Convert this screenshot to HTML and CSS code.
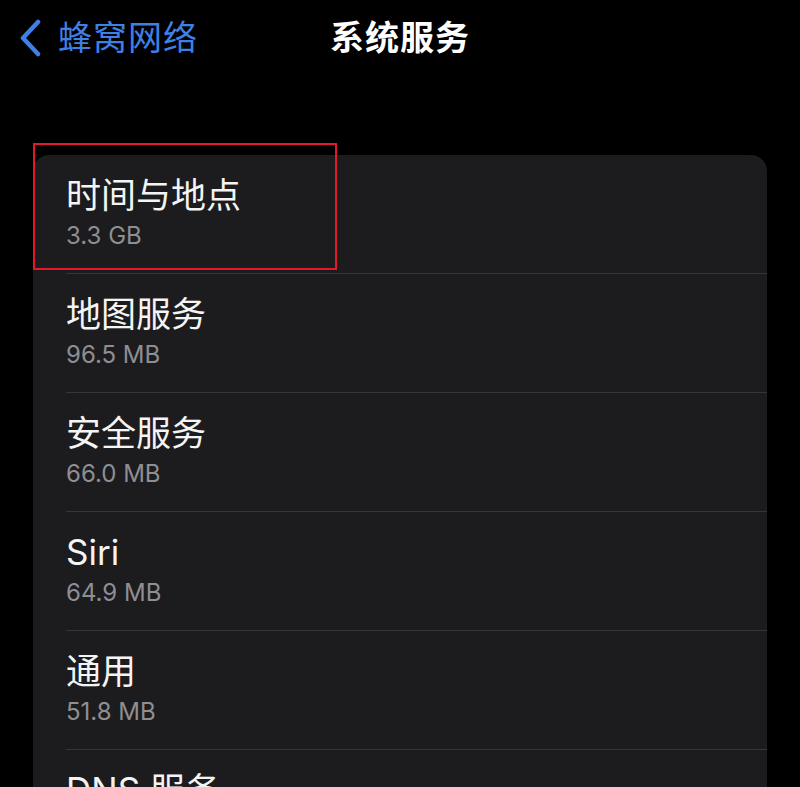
FILE: index.html
```html
<!DOCTYPE html>
<html lang="zh-CN">
<head>
<meta charset="utf-8">
<title>系统服务</title>
<link rel="stylesheet" href="styles.css">
</head>
<body>
<div class="screen">
  <header class="nav">
    <a class="back">
      <svg class="chev" width="24" height="38" viewBox="0 0 24 38"><path d="M20 3 L5 19 L20 35" fill="none" stroke="currentColor" stroke-width="4.5" stroke-linecap="round" stroke-linejoin="round"/></svg>
      <span class="back-label">蜂窝网络</span>
    </a>
    <h1 class="title">系统服务</h1>
  </header>
  <section class="card">
    <div class="row"><div class="row-title">时间与地点</div><div class="row-sub">3.3 GB</div></div>
    <div class="row"><div class="row-title">地图服务</div><div class="row-sub">96.5 MB</div></div>
    <div class="row"><div class="row-title">安全服务</div><div class="row-sub">66.0 MB</div></div>
    <div class="row"><div class="row-title">Siri</div><div class="row-sub">64.9 MB</div></div>
    <div class="row"><div class="row-title">通用</div><div class="row-sub">51.8 MB</div></div>
    <div class="row"><div class="row-title">DNS 服务</div><div class="row-sub">40.2 MB</div></div>
  </section>
  <div class="highlight"></div>
</div>
</body>
</html>
```
FILE: styles.css
```css
html, body {
  margin: 0;
  padding: 0;
  background: #000;
  overflow: hidden;
}
body {
  font-family: "Inter", "Noto Sans CJK SC", sans-serif;
  color: #f2f2f2;
}
.screen {
  position: relative;
  width: 800px;
  height: 787px;
  overflow: hidden;
}
.nav {
  position: relative;
  height: 155px;
}
.back {
  position: absolute;
  left: 18px;
  top: 18px;
  display: flex;
  align-items: center;
  gap: 16px;
  color: #3f80e6;
}
.chev { display: block; }
.back-label {
  font-size: 34px;
  line-height: 40px;
  letter-spacing: 1px;
}
.title {
  margin: 0;
  padding-top: 18px;
  text-align: center;
  font-size: 34px;
  line-height: 40px;
  font-weight: 700;
  color: #fff;
  letter-spacing: 1px;
}
.card {
  margin: 0 33px;
  background: #1c1c1e;
  border-radius: 16px;
  padding-left: 33px;
}
.row {
  padding: 18px 0;
  border-bottom: 1px solid #363638;
}
.row-title {
  font-size: 35px;
  line-height: 44px;
  color: #f4f4f4;
}
.row-sub {
  font-size: 24px;
  line-height: 38px;
  color: #8e8e93;
}
.highlight {
  position: absolute;
  left: 33px;
  top: 143px;
  width: 300px;
  height: 123px;
  border: 2px solid #e3182a;
}
```
